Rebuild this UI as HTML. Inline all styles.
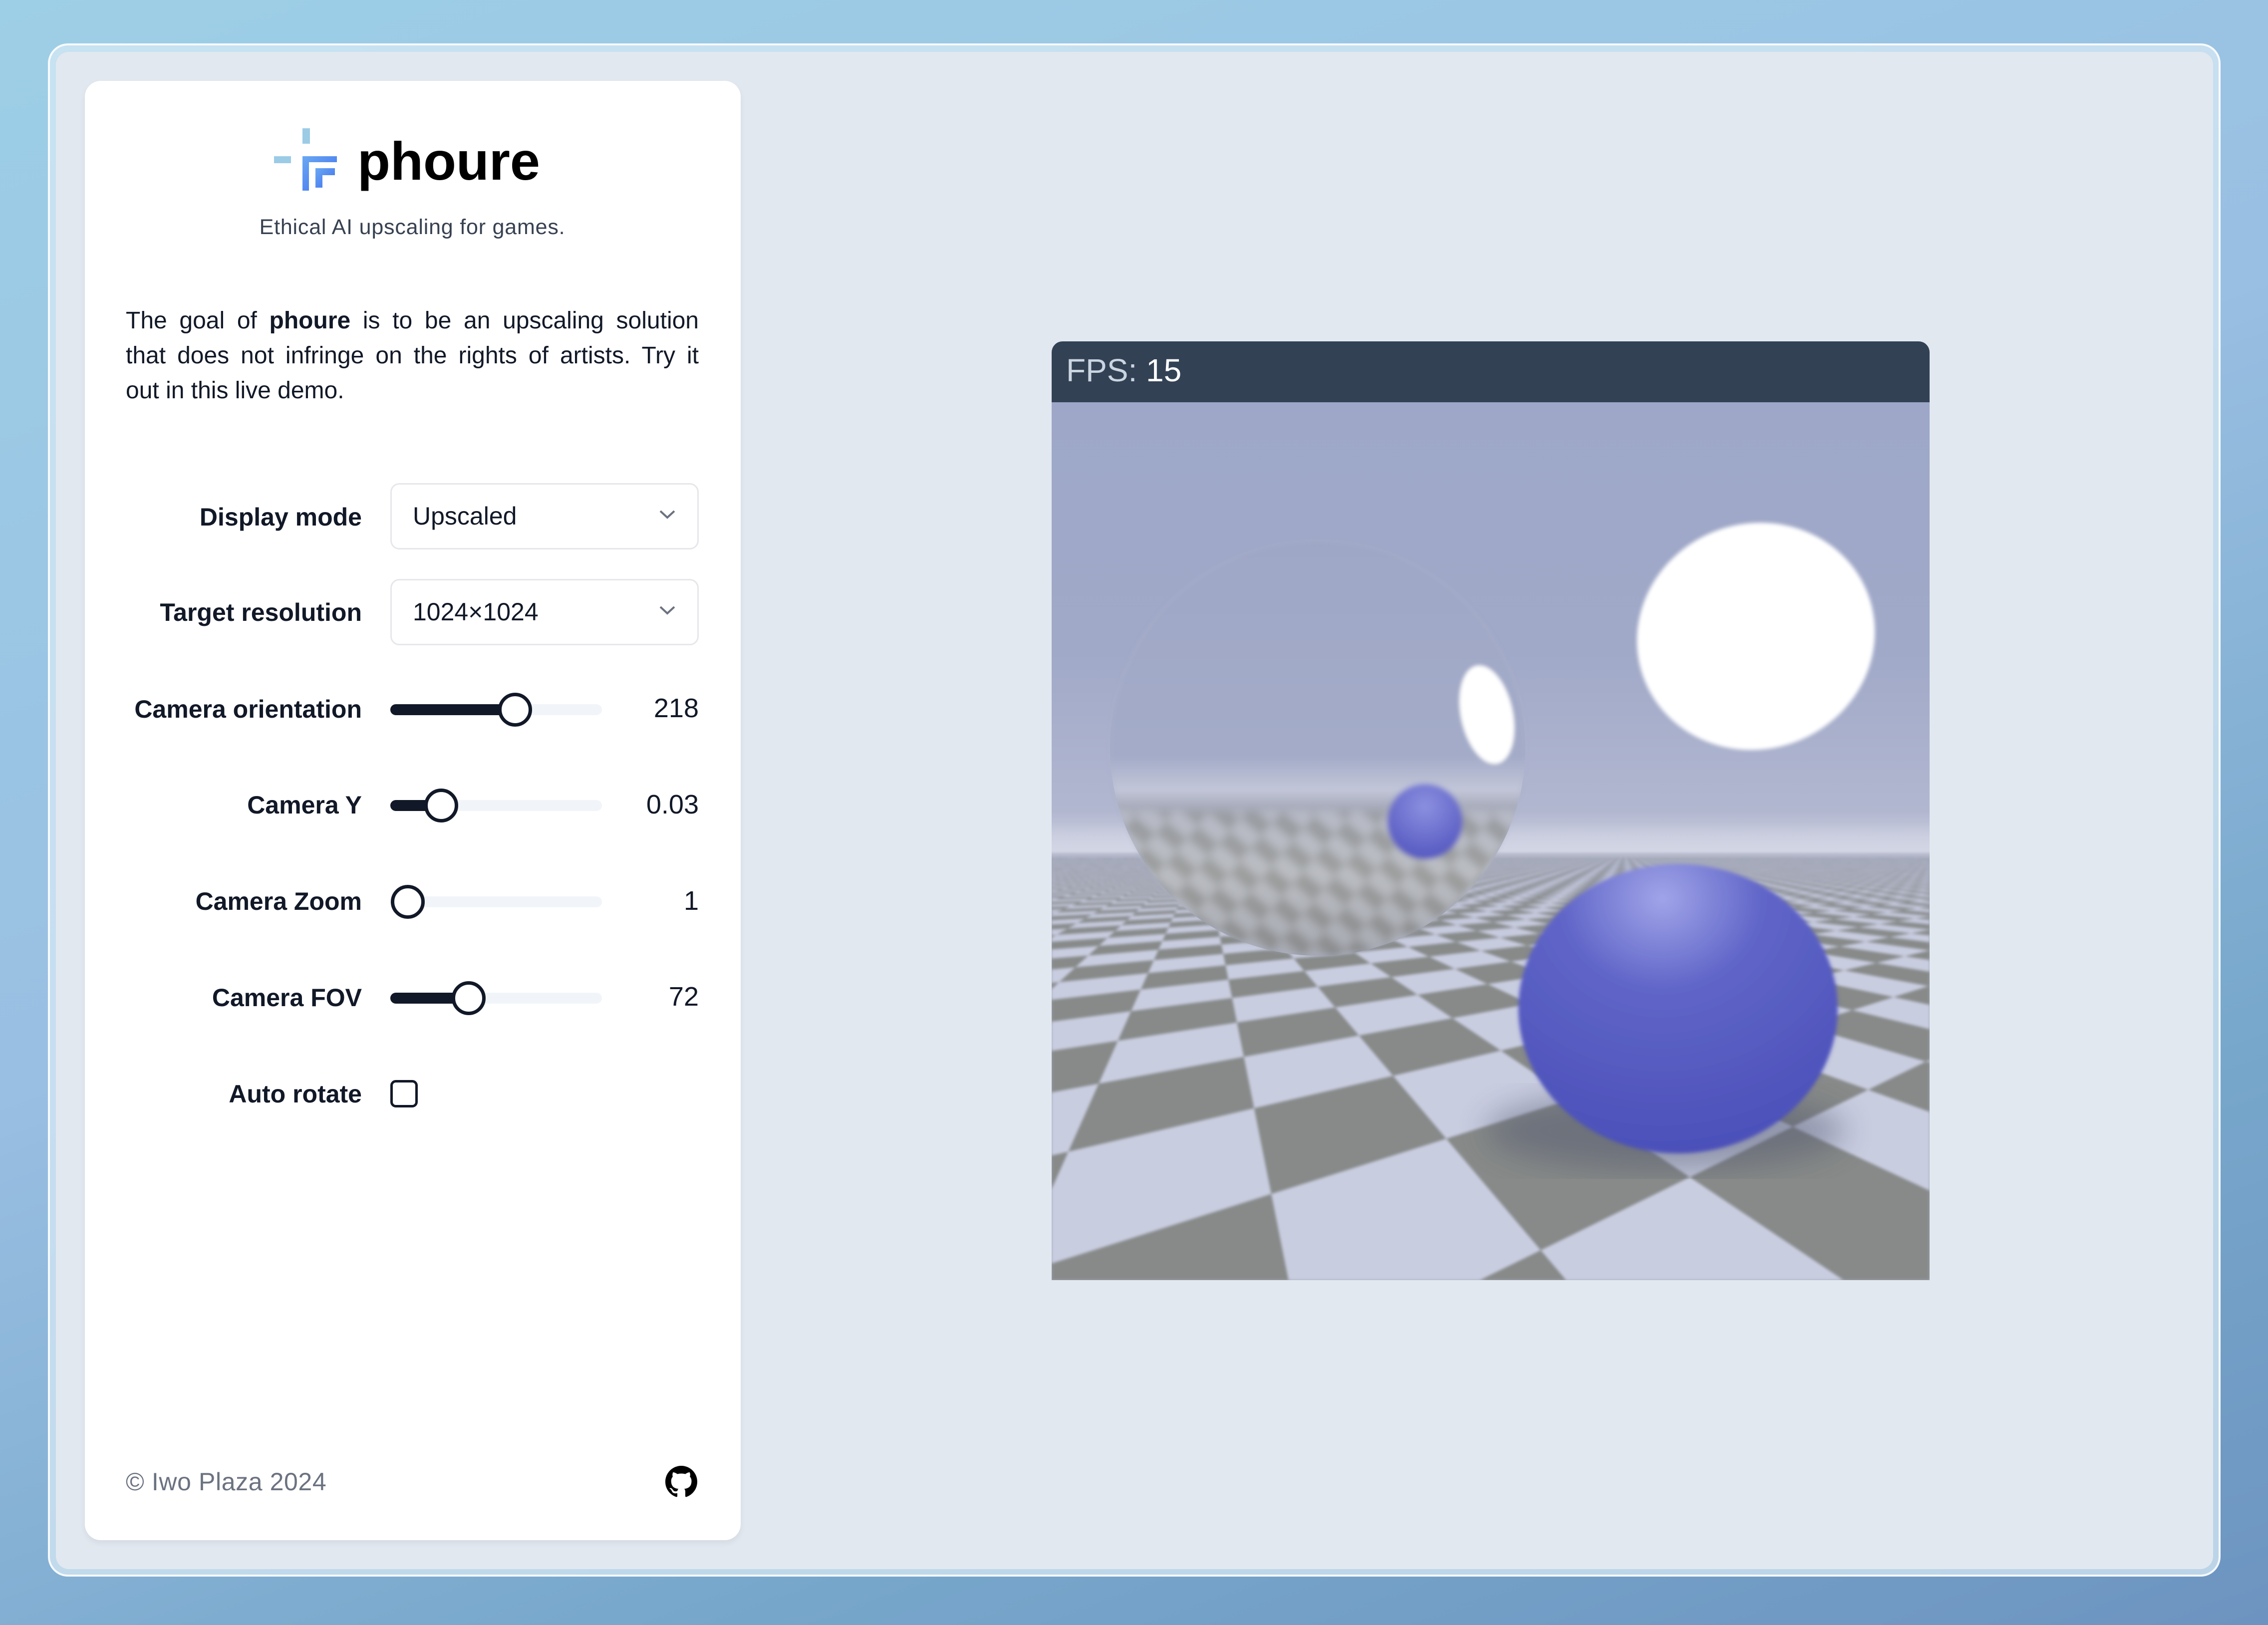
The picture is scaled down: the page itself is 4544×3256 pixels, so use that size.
<!DOCTYPE html>
<html><head><meta charset="utf-8">
<style>
*{margin:0;padding:0;box-sizing:border-box}
html,body{width:4544px;height:3256px;overflow:hidden}
body{font-family:"Liberation Sans",sans-serif;background:linear-gradient(160deg,#9dcfe6 0%,#99bfe2 45%,#78a8cc 75%,#6d94c0 100%);position:relative}
.frame{position:absolute;left:96px;top:87px;width:4353px;height:3072px;border-radius:40px;background:rgba(214,232,244,0.75);border:4px solid rgba(255,255,255,0.85)}
.inner{position:absolute;left:112px;top:104px;width:4322px;height:3040px;border-radius:26px;background:#e2e8f0}
.panel{position:absolute;left:170px;top:162px;width:1314px;height:2924px;border-radius:32px;background:#fff;box-shadow:0 6px 12px rgba(0,0,0,0.06)}
.abs{position:absolute}
.lbl{position:absolute;right:0;width:700px;text-align:right;font-size:50px;font-weight:bold;color:#111827;letter-spacing:0px}
.row{position:absolute;left:0;width:725px}
.sel{position:absolute;left:782px;width:618px;height:133px;border:3px solid #e5e7eb;border-radius:18px;font-size:50px;color:#111827;padding-left:42px;line-height:127px}
.sel svg{position:absolute;right:42px;top:48px}
.track{position:absolute;left:782px;width:424px;height:22px;border-radius:11px;background:#f1f5f9}
.fill{position:absolute;left:0;top:0;height:22px;border-radius:11px;background:#111827}
.thumb{position:absolute;width:68px;height:68px;border-radius:50%;background:#fff;border:7px solid #111827;top:-23px;margin-left:-34px}
.val{position:absolute;right:0;width:300px;text-align:right;font-size:54px;color:#111827}
.p{position:absolute;left:252px;width:1148px;font-size:48px;color:#111827;text-align:justify;text-align-last:justify;line-height:70px;height:70px;white-space:nowrap}
</style></head><body>
<div class="frame"></div>
<div class="inner"></div>
<div class="panel"></div>

<div class="abs" style="left:606px;top:257px;width:15px;height:31px;background:#9ccbe6"></div>
<div class="abs" style="left:549px;top:313px;width:34px;height:14px;background:#9ccbe6"></div>
<svg class="abs" style="left:606px;top:313px" width="70" height="70" viewBox="0 0 70 70">
<defs><linearGradient id="lg" x1="0" y1="0" x2="1" y2="1"><stop offset="0" stop-color="#6aa8f2"/><stop offset="1" stop-color="#3e6ff0"/></linearGradient></defs>
<path d="M0 0H69V12H13V69H0Z" fill="url(#lg)"/>
<path d="M26 24H65V38H40V63H26Z" fill="url(#lg)"/>
</svg>
<div class="abs" style="left:716px;top:258px;font-size:108px;font-weight:bold;color:#000;line-height:130px;letter-spacing:0px">phoure</div>
<div class="abs" style="left:480px;top:430px;width:692px;text-align:center;font-size:43px;color:#374151;line-height:50px;letter-spacing:0.8px">Ethical AI upscaling for games.</div>

<div class="p" style="top:608px">The goal of <b>phoure</b> is to be an upscaling solution</div>
<div class="p" style="top:678px">that does not infringe on the rights of artists. Try it</div>
<div class="p" style="top:748px;text-align-last:left">out in this live demo.</div>

<div class="row" style="top:1007px"><div class="lbl" style="top:0">Display mode</div></div>
<div class="sel" style="top:968px">Upscaled<svg width="36" height="24" viewBox="0 0 36 24"><polyline points="4,5 18,18 32,5" fill="none" stroke="#6b7280" stroke-width="4"/></svg></div>

<div class="row" style="top:1198px"><div class="lbl">Target resolution</div></div>
<div class="sel" style="top:1160px">1024×1024<svg width="36" height="24" viewBox="0 0 36 24"><polyline points="4,5 18,18 32,5" fill="none" stroke="#6b7280" stroke-width="4"/></svg></div>

<div class="row" style="top:1392px"><div class="lbl">Camera orientation</div></div>
<div class="track" style="top:1411px"><div class="fill" style="width:250px"></div><div class="thumb" style="left:250px"></div></div>
<div class="val" style="left:1100px;top:1388px">218</div>

<div class="row" style="top:1584px"><div class="lbl">Camera Y</div></div>
<div class="track" style="top:1603px"><div class="fill" style="width:102px"></div><div class="thumb" style="left:102px"></div></div>
<div class="val" style="left:1100px;top:1581px">0.03</div>

<div class="row" style="top:1777px"><div class="lbl">Camera Zoom</div></div>
<div class="track" style="top:1796px"><div class="thumb" style="left:35px"></div></div>
<div class="val" style="left:1100px;top:1774px">1</div>

<div class="row" style="top:1970px"><div class="lbl">Camera FOV</div></div>
<div class="track" style="top:1989px"><div class="fill" style="width:157px"></div><div class="thumb" style="left:157px"></div></div>
<div class="val" style="left:1100px;top:1966px">72</div>

<div class="row" style="top:2163px"><div class="lbl">Auto rotate</div></div>
<div class="abs" style="left:782px;top:2164px;width:55px;height:55px;border:5px solid #111827;border-radius:11px"></div>

<div class="abs" style="left:252px;top:2940px;font-size:50px;color:#6b7280;letter-spacing:0.6px">© Iwo Plaza 2024</div>
<svg class="abs" style="left:1333px;top:2937px" width="64" height="64" viewBox="0 0 16 16"><path fill="#000" d="M8 0C3.58 0 0 3.58 0 8c0 3.54 2.290 6.530 5.470 7.590.4.07.55-.17.55-.38 0-.19-.01-.82-.01-1.49-2.01.37-2.53-.49-2.69-.94-.09-.23-.48-.94-.82-1.130-.28-.15-.68-.52-.01-.53.63-.01 1.08.58 1.23.82.72 1.21 1.87.87 2.33.66.07-.52.28-.87.51-1.07-1.78-.2-3.64-.89-3.64-3.95 0-.87.31-1.59.82-2.15-.08-.2-.36-1.02.08-2.12 0 0 .67-.21 2.2.82.64-.18 1.32-.27 2-.27.68 0 1.36.09 2 .27 1.53-1.04 2.2-.82 2.2-.82.44 1.1.16 1.92.08 2.12.51.56.82 1.27.82 2.15 0 3.07-1.87 3.75-3.65 3.95.29.25.54.73.54 1.48 0 1.07-.01 1.93-.01 2.2 0 .21.15.46.55.38A8.013 8.013 0 0016 8c0-4.42-3.58-8-8-8z"/></svg>

<div class="abs" style="left:2107px;top:684px;width:1759px;height:122px;background:#334155;border-radius:22px 22px 0 0"></div>
<div class="abs" style="left:2136px;top:706px;font-size:64px;line-height:72px;color:#cbd5e1">FPS: <span style="color:#fff">15</span></div>

<div class="abs" style="left:2107px;top:806px;width:1759px;height:1759px;overflow:hidden;background:linear-gradient(#9ea7c8 0px,#a0a9c8 500px,#b2b7d0 820px,#d2d5e3 899px,#a4a8ba 905px,#a2a6b8 1759px)">
  <canvas id="cv" width="1759" height="1759" style="position:absolute;left:0;top:0;filter:blur(3px)"></canvas>
  <div style="position:absolute;left:0;top:0;width:1759px;height:1759px;background:linear-gradient(rgba(205,208,224,0) 840px,rgba(210,213,228,0.8) 899px,rgba(165,170,192,0.5) 915px,rgba(165,170,192,0.15) 1000px,rgba(165,170,192,0) 1100px)"></div>
  <svg style="position:absolute;left:0;top:0" width="1759" height="1759" viewBox="0 0 1759 1759">
    <defs>
      <filter id="b8"><feGaussianBlur stdDeviation="8"/></filter>
      <filter id="b4"><feGaussianBlur stdDeviation="4"/></filter>
      <filter id="b30"><feGaussianBlur stdDeviation="30"/></filter>
      <clipPath id="gc"><circle cx="533" cy="693" r="416"/></clipPath>
      <linearGradient id="gs" x1="0" y1="277" x2="0" y2="1109" gradientUnits="userSpaceOnUse">
        <stop offset="0" stop-color="#9ea7c6"/><stop offset="0.52" stop-color="#a3abc8"/>
        <stop offset="0.6" stop-color="#c2c6d8"/><stop offset="0.64" stop-color="#a8acbc"/>
        <stop offset="0.8" stop-color="#b0b2b4"/><stop offset="1" stop-color="#8a8c94"/>
      </linearGradient>
      <radialGradient id="bs" cx="0.45" cy="0.12" r="0.9"><stop offset="0" stop-color="#a0a4e8"/><stop offset="0.35" stop-color="#6065c8"/><stop offset="1" stop-color="#4a4fb8"/></radialGradient>
      <radialGradient id="ss" cx="0.5" cy="0.3" r="0.7"><stop offset="0" stop-color="#8c90e0"/><stop offset="1" stop-color="#5558c0"/></radialGradient>
      <pattern id="ck" width="110" height="110" patternUnits="userSpaceOnUse" patternTransform="rotate(40) scale(1,0.6)"><rect width="110" height="110" fill="#c6c9d2"/><rect width="55" height="55" fill="#8a8c88"/><rect x="55" y="55" width="55" height="55" fill="#8a8c88"/></pattern>
    </defs>
    <ellipse cx="1230" cy="1460" rx="360" ry="80" fill="#50546e" opacity="0.45" filter="url(#b30)"/>
    <g clip-path="url(#gc)" filter="url(#b4)">
      <rect x="100" y="270" width="900" height="850" fill="url(#gs)"/>
      <rect x="100" y="820" width="900" height="300" fill="url(#ck)" opacity="0.5" filter="url(#b8)"/>
      <circle cx="748" cy="840" r="75" fill="url(#ss)" filter="url(#b4)"/>
      <ellipse cx="872" cy="626" rx="52" ry="100" transform="rotate(-12 872 626)" fill="#fff"/>
    </g>
    <circle cx="533" cy="693" r="415" fill="none" stroke="#aeb4cc" stroke-width="3" opacity="0.6" filter="url(#b4)"/>
    <ellipse cx="1411" cy="469" rx="240" ry="226" transform="rotate(-20 1411 469)" fill="#fff" filter="url(#b4)"/>
    <ellipse cx="1255" cy="1215" rx="320" ry="290" fill="url(#bs)" filter="url(#b4)"/>
  </svg>
</div>
<script>
(function(){
var c=document.getElementById('cv'),g=c.getContext('2d');
var cx=880,hy=899,f=1000,H=1,s=0.56,th=30*Math.PI/180,co=Math.cos(th),si=Math.sin(th),ox=0.2,oz=0;
function P(u,v){var X=u*co-v*si+ox,Z=u*si+v*co+oz;return [X,Z];}
var N=160;
for(var i=-N;i<N;i++){for(var j=-N;j<N;j++){
 var pts=[P(i*s,j*s),P((i+1)*s,j*s),P((i+1)*s,(j+1)*s),P(i*s,(j+1)*s)];
 var ok=true,minZ=1e9;
 for(var k=0;k<4;k++){if(pts[k][1]<0.3){ok=false;break;} if(pts[k][1]<minZ)minZ=pts[k][1];}
 if(!ok||minZ>150)continue;
 var sx=[];var vis=false;
 for(k=0;k<4;k++){var x=cx+f*pts[k][0]/pts[k][1],y=hy+f*H/pts[k][1];sx.push([x,y]);if(x>-50&&x<1810&&y<1800)vis=true;}
 if(!vis)continue;
 var dark=((i+j)&1)!==0;
 g.fillStyle=dark?'#878a88':'#c9cde0';
 g.beginPath();g.moveTo(sx[0][0],sx[0][1]);for(k=1;k<4;k++)g.lineTo(sx[k][0],sx[k][1]);g.closePath();g.fill();
}}
})();
</script>
</body></html>
